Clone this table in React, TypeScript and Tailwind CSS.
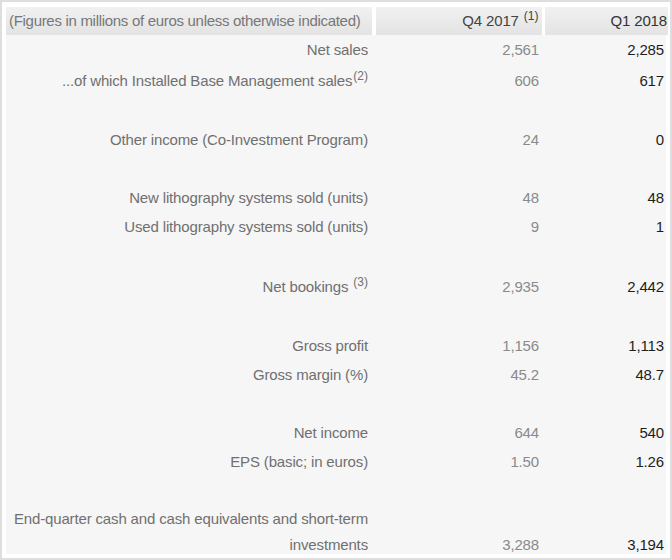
type Row = {
  label: React.ReactNode;
  q4?: string;
  q1?: string;
  gap?: string;
  h?: string;
};

const Sup = ({ children }: { children: React.ReactNode }) => (
  <span className="text-[12px] relative top-[-6px] ml-[1px] tracking-normal">{children}</span>
);

const rows: Row[] = [
  { label: "Net sales", q4: "2,561", q1: "2,285" },
  {
    label: (
      <>
        ...of which Installed Base Management sales<Sup>(2)</Sup>
      </>
    ),
    q4: "606",
    q1: "617",
    gap: "mt-[2px]",
  },
  { label: "Other income (Co-Investment Program)", q4: "24", q1: "0", gap: "mt-[30px]" },
  { label: "New lithography systems sold (units)", q4: "48", q1: "48", gap: "mt-[29px]" },
  { label: "Used lithography systems sold (units)", q4: "9", q1: "1" },
  {
    label: (
      <>
        Net bookings <Sup>(3)</Sup>
      </>
    ),
    q4: "2,935",
    q1: "2,442",
    gap: "mt-[31px]",
    h: "h-[30px]",
  },
  { label: "Gross profit", q4: "1,156", q1: "1,113", gap: "mt-[29px]" },
  { label: "Gross margin (%)", q4: "45.2", q1: "48.7" },
  { label: "Net income", q4: "644", q1: "540", gap: "mt-[29px]" },
  { label: "EPS (basic; in euros)", q4: "1.50", q1: "1.26" },
];

export default function App() {
  return (
    <div
      className="w-[672px] h-[560px] bg-white border-2 border-[#dedede] p-1 text-[15px] leading-[29px] tracking-[-0.01em]"
      style={{ fontFamily: '"Liberation Sans", Arial, sans-serif' }}
    >
      <div className="h-full bg-[#f6f6f6]">
        {/* header */}
        <div className="grid grid-cols-[366px_166px_123px] gap-x-[3.5px] bg-white pt-[1px]">
          <div className="h-[28px] bg-gradient-to-b from-[#f1f1f1] to-[#e3e3e3] text-[#777] pl-[3px] leading-[28px] whitespace-nowrap tracking-[-0.02em]">
            (Figures in millions of euros unless otherwise indicated)
          </div>
          <div className="h-[28px] bg-gradient-to-b from-[#f1f1f1] to-[#e3e3e3] text-[#444] text-right pr-[3px] leading-[28px]">
            Q4 2017 <Sup>(1)</Sup>
          </div>
          <div className="h-[28px] bg-gradient-to-b from-[#f1f1f1] to-[#e3e3e3] text-[#333] text-right pr-[1px] leading-[28px]">
            Q1 2018
          </div>
        </div>

        {/* body */}
        <div className="flex flex-col">
          {rows.map((r, i) => (
            <div
              key={i}
              className={`grid grid-cols-[366px_170px_123px] ${r.h ?? "h-[29px]"} ${r.gap ?? ""}`}
            >
              <div className="text-right pr-[4px] text-[#707070]">{r.label}</div>
              <div className="text-right pr-[3px] text-[#8a8a8a]">{r.q4}</div>
              <div className="text-right pr-[1px] text-[#1e1e1e]">{r.q1}</div>
            </div>
          ))}
          <div className="grid grid-cols-[366px_170px_123px] mt-[30px] leading-[26px]">
            <div className="text-right pr-[4px] text-[#707070]">
              End-quarter cash and cash equivalents and short-term investments
            </div>
            <div className="text-right pr-[3px] text-[#8a8a8a] self-end">3,288</div>
            <div className="text-right pr-[1px] text-[#1e1e1e] self-end">3,194</div>
          </div>
        </div>
      </div>
    </div>
  );
}
